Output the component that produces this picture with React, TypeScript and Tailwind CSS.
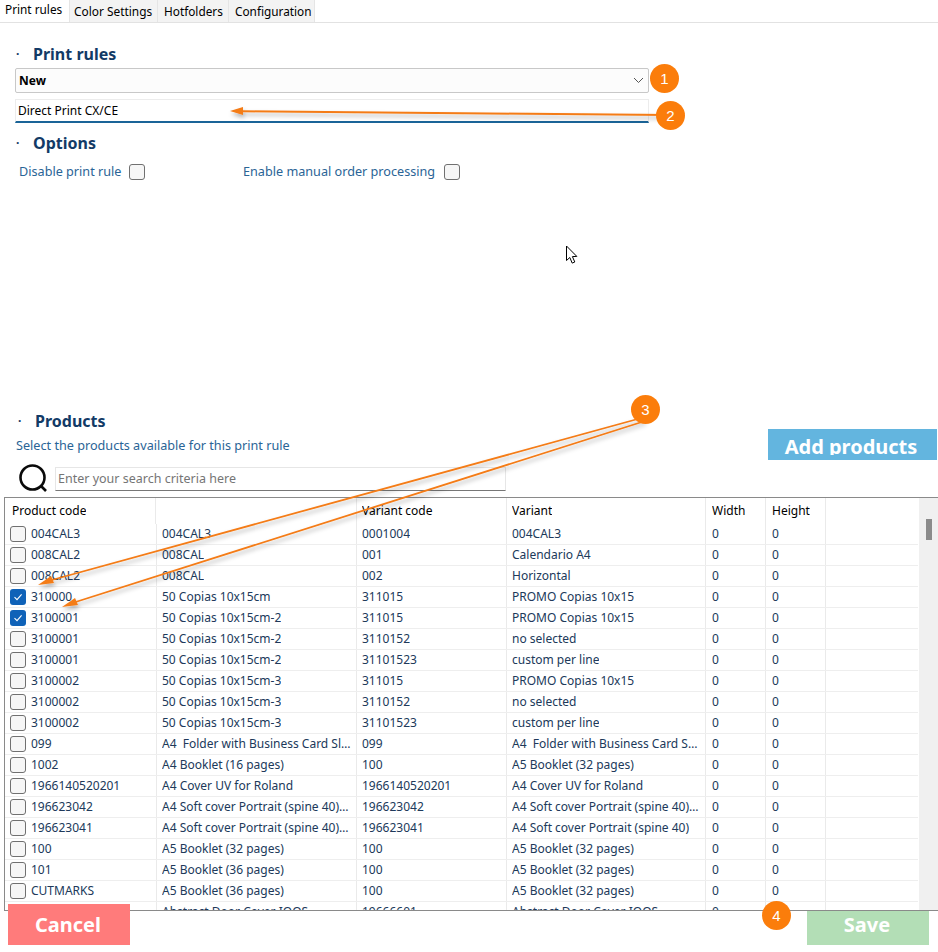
import React from "react";

type Row = { code: string; name: string; vcode: string; variant: string; checked?: boolean };

const rows: Row[] = [
  { code: "004CAL3", name: "004CAL3", vcode: "0001004", variant: "004CAL3" },
  { code: "008CAL2", name: "008CAL", vcode: "001", variant: "Calendario A4" },
  { code: "008CAL2", name: "008CAL", vcode: "002", variant: "Horizontal" },
  { code: "310000", name: "50 Copias 10x15cm", vcode: "311015", variant: "PROMO Copias 10x15", checked: true },
  { code: "3100001", name: "50 Copias 10x15cm-2", vcode: "311015", variant: "PROMO Copias 10x15", checked: true },
  { code: "3100001", name: "50 Copias 10x15cm-2", vcode: "3110152", variant: "no selected" },
  { code: "3100001", name: "50 Copias 10x15cm-2", vcode: "31101523", variant: "custom per line" },
  { code: "3100002", name: "50 Copias 10x15cm-3", vcode: "311015", variant: "PROMO Copias 10x15" },
  { code: "3100002", name: "50 Copias 10x15cm-3", vcode: "3110152", variant: "no selected" },
  { code: "3100002", name: "50 Copias 10x15cm-3", vcode: "31101523", variant: "custom per line" },
  { code: "099", name: "A4 \u00a0Folder with Business Card Slots", vcode: "099", variant: "A4 \u00a0Folder with Business Card Slots" },
  { code: "1002", name: "A4 Booklet (16 pages)", vcode: "100", variant: "A5 Booklet (32 pages)" },
  { code: "1966140520201", name: "A4 Cover UV for Roland", vcode: "1966140520201", variant: "A4 Cover UV for Roland" },
  { code: "196623042", name: "A4 Soft cover Portrait (spine 40) matte", vcode: "196623042", variant: "A4 Soft cover Portrait (spine 40) matte" },
  { code: "196623041", name: "A4 Soft cover Portrait (spine 40) gloss", vcode: "196623041", variant: "A4 Soft cover Portrait (spine 40)" },
  { code: "100", name: "A5 Booklet (32 pages)", vcode: "100", variant: "A5 Booklet (32 pages)" },
  { code: "101", name: "A5 Booklet (36 pages)", vcode: "100", variant: "A5 Booklet (32 pages)" },
  { code: "CUTMARKS", name: "A5 Booklet (36 pages)", vcode: "100", variant: "A5 Booklet (32 pages)" },
  { code: "", name: "Abstract Door Cover IOOS", vcode: "19666601", variant: "Abstract Door Cover IOOS" },
];

const font = { fontFamily: '"Noto Sans", "Open Sans", sans-serif' };

function Box({ checked = false }: { checked?: boolean }) {
  if (checked) {
    return (
      <span className="flex h-4 w-4 shrink-0 items-center justify-center rounded-[3px] bg-[#0f62b8]">
        <svg width="10" height="10" viewBox="0 0 10 10" fill="none" stroke="#fff" strokeWidth="1.1">
          <path d="M1.5 5.2 4 7.6 8.6 2.4" />
        </svg>
      </span>
    );
  }
  return <span className="block h-4 w-4 shrink-0 rounded-[3px] border border-[#707070] bg-[#f6f6f6]" />;
}

function Heading({ title, className }: { title: string; className: string }) {
  return (
    <div className={`flex items-center text-[16px] leading-[22px] font-bold text-[#123a66] ${className}`}>
      <span className="w-[17px] text-[12px] leading-none">·</span>
      <span>{title}</span>
    </div>
  );
}

function Cell({ w, pl = "pl-[5px]", children }: { w: string; pl?: string; children: React.ReactNode }) {
  return (
    <div className={`${w} ${pl} flex h-full shrink-0 items-center overflow-hidden whitespace-nowrap border-r border-[#eaeaea] pr-[5px]`}>
      <span className="block truncate">{children}</span>
    </div>
  );
}

function Overlay() {
  const orange = "#f47b16";
  return (
    <div className="pointer-events-none absolute inset-0">
      <svg width="938" height="952" viewBox="0 0 938 952" fill="none" className="absolute left-0 top-0">
        <defs>
          <filter id="s" x="-5%" y="-50%" width="110%" height="200%">
            <feDropShadow dx="1" dy="3" stdDeviation="2" floodColor="#000" floodOpacity="0.3" />
          </filter>
        </defs>
        <g filter="url(#s)">
          <path d="M668 115 242 111.2" stroke={orange} strokeWidth="2" />
          <path d="M230 111 243 107 243 115Z" fill={orange} />
          <path d="M645 417 50 580.5" stroke={orange} strokeWidth="1.8" />
          <path d="M38 585 51 576 54 583Z" fill={orange} />
          <path d="M645 421 74 602.5" stroke={orange} strokeWidth="1.8" />
          <path d="M62 607 75 598 78 605Z" fill={orange} />
        </g>
        <path d="M566.5 246v14.5l3.3-3 2.4 5.6 2.6-1.1-2.4-5.4 4.4-.2z" fill="#fff" stroke="#000" strokeWidth="1" />
      </svg>
      {[
        { n: "1", x: "left-[650px] top-[64px]" },
        { n: "2", x: "left-[656px] top-[101px]" },
        { n: "3", x: "left-[631px] top-[395px]" },
        { n: "4", x: "left-[762px] top-[901px]" },
      ].map((b) => (
        <div
          key={b.n}
          className={`absolute ${b.x} flex h-[29px] w-[29px] items-center justify-center rounded-full bg-[#fb7d0b] font-['Liberation_Sans',sans-serif] text-[15px] leading-none text-white`}
        >
          {b.n}
        </div>
      ))}
    </div>
  );
}

export default function App() {
  return (
    <div style={font} className="relative h-[952px] w-[938px] overflow-hidden bg-white text-[12px] text-black">
      {/* tabs */}
      <div className="flex h-[23px] items-stretch border-b border-[#e2e2e2]">
        <div className="w-[69px] pl-[5px] text-[11.8px] leading-[19px]">Print rules</div>
        <div className="w-[88px] border-l border-[#e5e5e5] bg-[#f3f3f3] pl-[4px] text-[11.9px] leading-[23px]">Color Settings</div>
        <div className="w-[71px] border-l border-[#e5e5e5] bg-[#f3f3f3] pl-[6px] text-[11.8px] leading-[23px]">Hotfolders</div>
        <div className="w-[87px] border-x border-[#e5e5e5] bg-[#f3f3f3] pl-[6px] text-[11.8px] leading-[23px]">Configuration</div>
      </div>

      {/* print rules */}
      <Heading title="Print rules" className="ml-[16px] mt-[20px]" />
      <div className="ml-[15px] mt-[3px] flex h-[25px] w-[634px] items-center justify-between rounded-[2px] border border-[#c8c8c8] bg-[#fcfcfc] pl-[3px] pr-[4px] font-bold">
        <span>New</span>
        <svg width="11" height="7" viewBox="0 0 11 7" fill="none" stroke="#555" strokeWidth="1">
          <path d="M1 1l4.5 4.5L10 1" />
        </svg>
      </div>
      <div className="ml-[15px] mt-[6px] flex h-[24px] w-[634px] items-center border-x border-t border-b-2 border-[#ececec] border-b-[#1a6498] pl-[2px]">
        Direct Print CX/CE
      </div>

      {/* options */}
      <Heading title="Options" className="ml-[16px] mt-[9px]" />
      <div className="ml-[19px] mt-[9px] flex h-[17px] items-center text-[12.65px] text-[#2a6496]">
        <span className="w-[110px] whitespace-nowrap">Disable print rule</span>
        <Box />
        <span className="ml-[98px] w-[201px] whitespace-nowrap">Enable manual order processing</span>
        <Box />
      </div>

      {/* products */}
      <div className="mt-[230px] flex h-[49px] items-start justify-between">
        <div>
          <Heading title="Products" className="ml-[18px] mt-[0px]" />
          <div className="ml-[16px] mt-[5px] text-[12.65px] leading-[17px] text-[#2a6496]">Select the products available for this print rule</div>
        </div>
        <div className="mr-px mt-[19px] h-[31px] w-[169px] bg-[#63b5df]">
          <div className="flex h-[26px] items-start justify-center overflow-hidden pr-[3px] text-[20px] font-bold leading-[35px] text-white">
            Add products
          </div>
        </div>
      </div>

      {/* search */}
      <div className="mt-[5px] flex items-center">
        <svg width="30" height="30" viewBox="0 0 30 30" fill="none" stroke="#0a0a0a" strokeWidth="2.6" className="ml-[18px] shrink-0">
          <circle cx="14.5" cy="13.5" r="12" />
          <path d="M23 22l5 5" />
        </svg>
        <div className="ml-[7px] flex h-[24px] w-[451px] items-center border border-[#e6e6e6] border-b-[#777] pl-[2px] pt-[1px] text-[12.5px] text-[#757575]">
          Enter your search criteria here
        </div>
      </div>

      {/* table */}
      <div className="ml-[4px] mt-[3px] flex h-[414px] w-[934px] overflow-hidden border-x border-y border-[#8a8a8a] border-r-0 text-[#20395a]">
        <div className="w-[913px] shrink-0 overflow-hidden">
          <div className="flex h-[26px] text-black">
            <Cell w="w-[151px]" pl="pl-[7px]">Product code</Cell>
            <Cell w="w-[201px]">{""}</Cell>
            <Cell w="w-[150px]">Variant code</Cell>
            <Cell w="w-[199px]">Variant</Cell>
            <Cell w="w-[60px]" pl="pl-[6px]">Width</Cell>
            <Cell w="w-[60px]" pl="pl-[6px]">Height</Cell>
          </div>
          {rows.map((r, i) => (
            <div key={i} className="flex h-[21px] border-b border-[#eeeeee]">
              <div className="flex h-full w-[152px] shrink-0 items-center gap-[5px] border-r border-[#eaeaea] pl-[5px]">
                <Box checked={r.checked} />
                <span>{r.code}</span>
              </div>
              <Cell w="w-[200px]">{r.name}</Cell>
              <Cell w="w-[150px]">{r.vcode}</Cell>
              <Cell w="w-[199px]">{r.variant}</Cell>
              <Cell w="w-[60px]" pl="pl-[6px]">0</Cell>
              <Cell w="w-[60px]" pl="pl-[6px]">0</Cell>
            </div>
          ))}
        </div>
        <div className="ml-[1px] h-full w-[20px] bg-[#f0f0f0] pl-[7px] pt-[21px]">
          <div className="h-[21px] w-[6px] bg-[#8b8b8b]" />
        </div>
      </div>

      {/* footer */}
      <div className="flex h-[34px] items-end justify-between pl-[8px] pr-[9px]">
        <div className="flex h-[41px] w-[122px] items-center justify-center bg-[#ff7b7b] pr-[2px] text-[20px] font-bold text-white">Cancel</div>
        <div className="flex h-[34px] w-[122px] items-center justify-center bg-[#b3deb6] pb-[6px] pr-[2px] text-[20px] font-bold text-white">Save</div>
      </div>

      <Overlay />
    </div>
  );
}
